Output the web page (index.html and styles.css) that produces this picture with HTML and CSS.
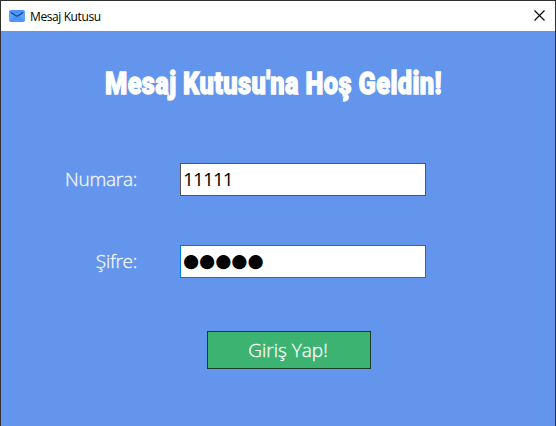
FILE: index.html
```html
<!DOCTYPE html>
<html lang="tr">
<head>
<meta charset="utf-8">
<title>Mesaj Kutusu</title>
<link rel="stylesheet" href="styles.css">
</head>
<body>
<div class="window">
  <header class="titlebar">
    <svg class="mail" width="16" height="12" viewBox="0 0 16 12"><rect width="16" height="12" rx="2" fill="#4c94fa"/><path d="M0 2l5 4-5 5zM16 2l-5 4 5 5z" fill="#60a4ff"/><path d="M2 2.5L6.4 5.6q1.6 1 3.2 0L14 2.5" fill="none" stroke="#174783" stroke-width="1.2"/></svg>
    <span class="caption">Mesaj Kutusu</span>
    <svg class="close" width="11" height="11" viewBox="0 0 11 11"><path d="M.5.5l10 10M10.5.5l-10 10" stroke="#000" stroke-width="1.1"/></svg>
  </header>
  <main class="content">
    <h1 class="heading"><span>Mesaj Kutusu'na Hoş Geldin!</span></h1>
    <div class="row">
      <div class="label"><span>Numara:</span></div>
      <div class="field"><span class="digits">11111</span></div>
    </div>
    <div class="row">
      <div class="label"><span>Şifre:</span></div>
      <div class="field focused"><span class="dots">●●●●●</span></div>
    </div>
    <button class="submit"><span>Giriş Yap!</span></button>
  </main>
</div>
</body>
</html>
```
FILE: styles.css
```css
* { box-sizing: border-box; }
body { margin: 0; overflow: hidden; }
.window {
  width: 556px; height: 426px;
  border: 1px solid #30302f; border-bottom: 0;
  background: #6495ed;
  font-family: "Open Sans", "Noto Sans", sans-serif;
}
.titlebar {
  height: 30px; padding: 0 10px 0 8px;
  display: flex; align-items: center;
  background: #fff;
}
.mail { margin-top: -1px; }
.caption { margin: 0 0 0 5px; font-size: 12px; letter-spacing: -0.4px; color: #000; white-space: nowrap; }
.close { margin-left: auto; margin-top: -1px; }
.content { display: flex; flex-direction: column; }
.heading {
  margin: 31px 0 0 104px; height: 42px; width: 340px;
  font: 900 32px/42px Roboto, sans-serif; color: #fff; white-space: nowrap;
  -webkit-text-stroke: 1.3px #fff;
}
.heading span { display: inline-block; letter-spacing: 0.5px; transform: scaleX(0.793); transform-origin: left; }
.row { display: flex; gap: 43px; height: 33px; margin-top: 49px; }
.heading + .row { margin-top: 59px; }
.label {
  width: 136px; text-align: right; color: #f4f7fe;
  font-size: 19px; font-weight: 300; line-height: 33px; letter-spacing: -0.25px;
  -webkit-text-stroke: 0.3px #f4f7fe;
}
.field {
  width: 246px; height: 33px; padding-left: 2px;
  border: 1px solid #555; background: #fff; color: #000;
  font-size: 19px; line-height: 31px; white-space: nowrap; overflow: hidden;
}
.focused { border-color: #0078d7; line-height: 29px; }
.digits { letter-spacing: -0.9px; }
.dots { font-family: "DejaVu Sans", sans-serif; font-size: 18.6px; letter-spacing: -0.1px; }
.submit {
  width: 164px; height: 38px; margin: 53px 0 0 206px; padding: 0 2px 0 0;
  border: 1px solid #183d28; background: #3cb371; color: #fff;
  font: 300 19px/36px "Open Sans", "Noto Sans", sans-serif;
  -webkit-text-stroke: 0.3px #fff;
}
```
